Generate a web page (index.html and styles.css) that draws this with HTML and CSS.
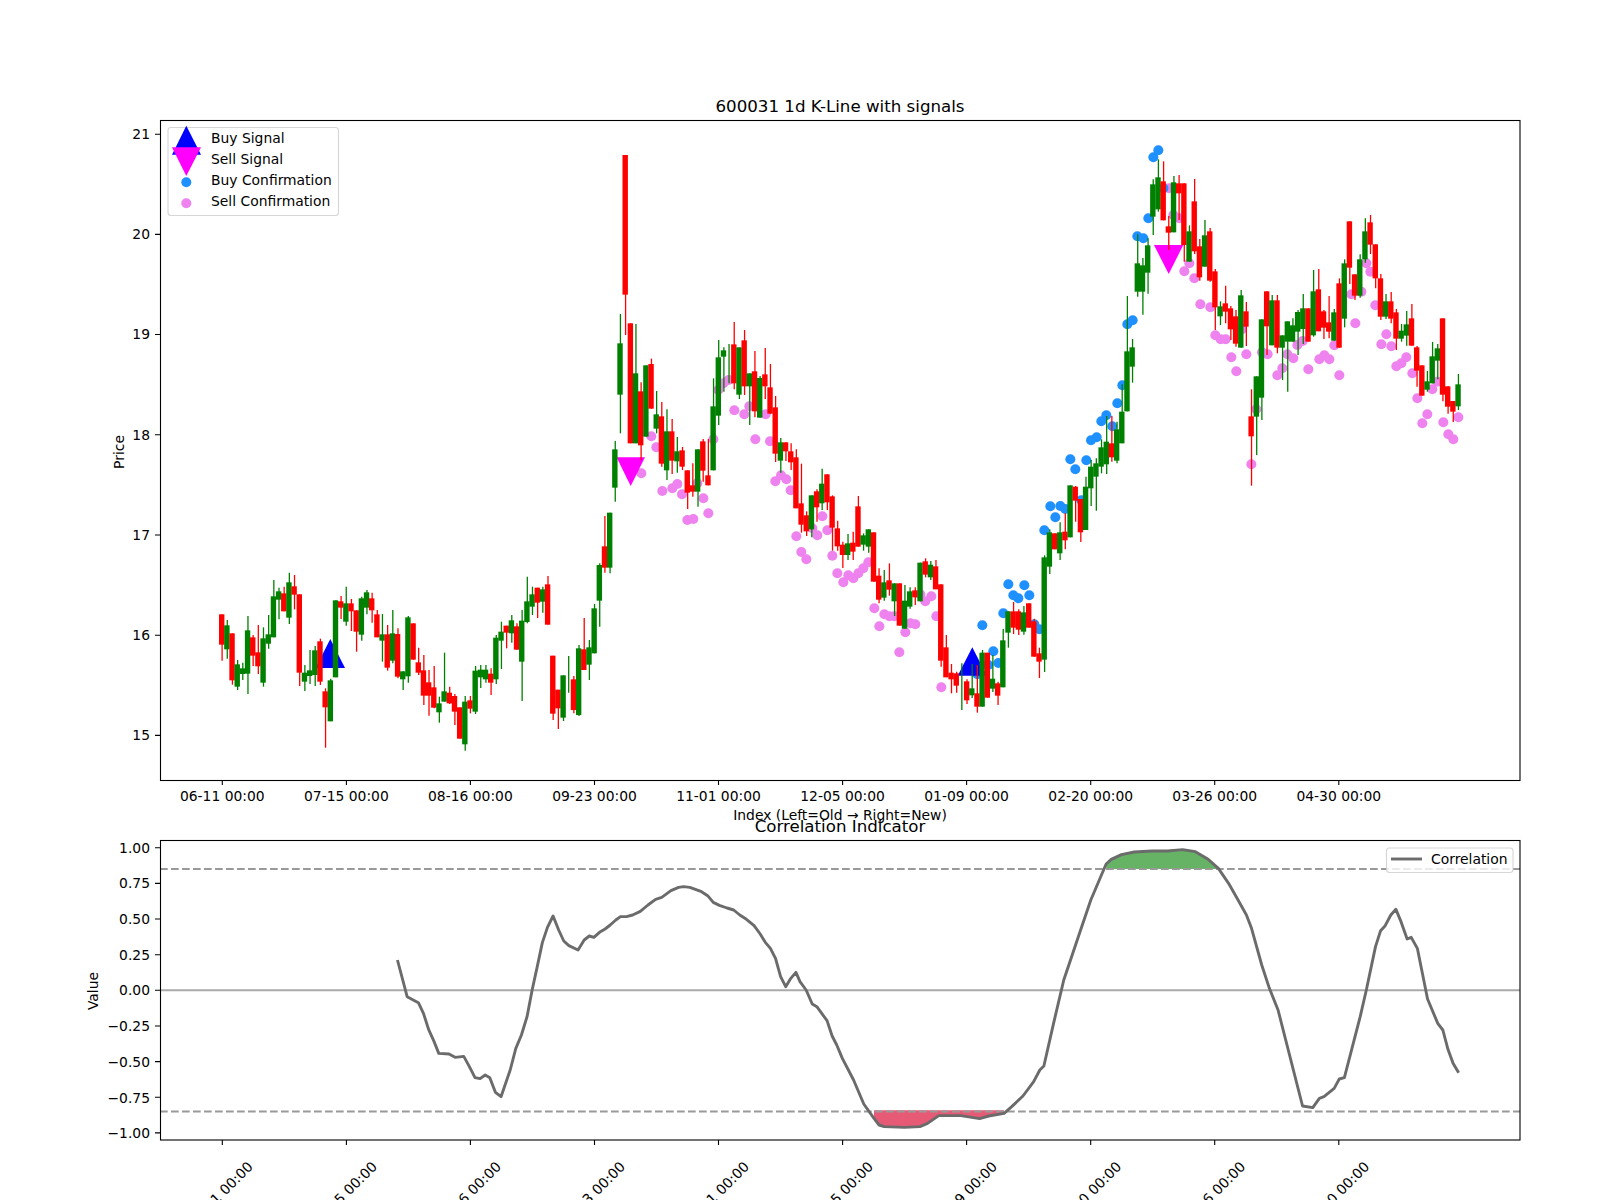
FILE: index.html
```html
<!DOCTYPE html>
<html lang="en">
<head>
<meta charset="utf-8">
<title>600031 1d K-Line with signals</title>
<link rel="stylesheet" href="styles.css">
</head>
<body>
<svg class="figure" id="figure" width="1600" height="1200" viewBox="0 0 1600 1200" xmlns="http://www.w3.org/2000/svg">
  <!-- price panel -->
  <g id="price-layer"></g>
  <rect class="frame" x="160.5" y="120.5" width="1359.5" height="660"/>
  <path class="tick" d="M222.3 780v5M346.4 780v5M470.4 780v5M594.5 780v5M718.5 780v5M842.6 780v5M966.6 780v5M1090.7 780v5M1214.7 780v5M1338.8 780v5M160 134.3h-5M160 234.4h-5M160 334.5h-5M160 434.7h-5M160 535h-5M160 635.3h-5M160 735.4h-5"/>
  <text class="title" x="840" y="112">600031 1d K-Line with signals</text>
  <g class="labels-end">
    <text x="150" y="139">21</text><text x="150" y="239">20</text><text x="150" y="339">19</text>
    <text x="150" y="439.5">18</text><text x="150" y="540">17</text><text x="150" y="640">16</text><text x="150" y="740">15</text>
  </g>
  <g class="labels-mid">
    <text x="222.3" y="801">06-11 00:00</text><text x="346.4" y="801">07-15 00:00</text><text x="470.4" y="801">08-16 00:00</text>
    <text x="594.5" y="801">09-23 00:00</text><text x="718.5" y="801">11-01 00:00</text><text x="842.6" y="801">12-05 00:00</text>
    <text x="966.6" y="801">01-09 00:00</text><text x="1090.7" y="801">02-20 00:00</text><text x="1214.7" y="801">03-26 00:00</text>
    <text x="1338.8" y="801">04-30 00:00</text>
    <text x="840" y="820">Index (Left=Old → Right=New)</text>
    <text transform="translate(124 452) rotate(-90)">Price</text>
    <text transform="translate(98 991) rotate(-90)">Value</text>
  </g>
  <!-- price legend -->
  <rect class="legend-box" x="168" y="127.5" width="170.5" height="88" rx="3"/>
  <path class="mark-buy" d="M186.3 125.7L201 154.7H172Z"/>
  <path class="mark-sell" d="M172 147.3H201L186.3 176Z"/>
  <circle class="dot-buy" cx="186.3" cy="182.3" r="5"/>
  <circle class="dot-sell" cx="186.3" cy="203.3" r="5"/>
  <text class="label" x="211" y="143">Buy Signal</text>
  <text class="label" x="211" y="164">Sell Signal</text>
  <text class="label" x="211" y="185">Buy Confirmation</text>
  <text class="label" x="211" y="206">Sell Confirmation</text>

  <!-- correlation panel -->
  <g id="corr-fill-layer"></g>
  <line class="zero" x1="160" x2="1520" y1="990.3" y2="990.3"/>
  <line class="threshold" x1="160" x2="1520" y1="869.1" y2="869.1"/>
  <line class="threshold" x1="160" x2="1520" y1="1111.5" y2="1111.5"/>
  <g id="corr-layer"></g>
  <rect class="frame" x="160.5" y="840.5" width="1359.5" height="299.5"/>
  <path class="tick" d="M222.3 1140v5M346.4 1140v5M470.4 1140v5M594.5 1140v5M718.5 1140v5M842.6 1140v5M966.6 1140v5M1090.7 1140v5M1214.7 1140v5M1338.8 1140v5M160 847.7h-5M160 883.4h-5M160 919h-5M160 954.7h-5M160 990.3h-5M160 1026h-5M160 1061.6h-5M160 1097.3h-5M160 1132.9h-5"/>
  <text class="title" x="840" y="832">Correlation Indicator</text>
  <g class="labels-end">
    <text x="150" y="852.7">1.00</text><text x="150" y="888.4">0.75</text><text x="150" y="924">0.50</text>
    <text x="150" y="959.7">0.25</text><text x="150" y="995.3">0.00</text><text x="150" y="1031">−0.25</text>
    <text x="150" y="1066.6">−0.50</text><text x="150" y="1103">−0.75</text><text x="150" y="1137.9">−1.00</text>
  </g>
  <rect class="legend-box" x="1386.5" y="848" width="126.5" height="24.5" rx="3"/>
  <line class="corr-line" x1="1391" x2="1422" y1="859" y2="859"/>
  <text class="label" x="1431" y="864">Correlation</text>
  <g class="labels-rot">
    <text transform="translate(220.3 1194) rotate(-45)">06-11 00:00</text>
    <text transform="translate(344.4 1194) rotate(-45)">07-15 00:00</text>
    <text transform="translate(468.4 1194) rotate(-45)">08-16 00:00</text>
    <text transform="translate(592.5 1194) rotate(-45)">09-23 00:00</text>
    <text transform="translate(716.5 1194) rotate(-45)">11-01 00:00</text>
    <text transform="translate(840.6 1194) rotate(-45)">12-05 00:00</text>
    <text transform="translate(964.6 1194) rotate(-45)">01-09 00:00</text>
    <text transform="translate(1088.7 1194) rotate(-45)">02-20 00:00</text>
    <text transform="translate(1212.7 1194) rotate(-45)">03-26 00:00</text>
    <text transform="translate(1336.8 1194) rotate(-45)">04-30 00:00</text>
  </g>
</svg>
<script src="chart.js"></script>
</body>
</html>
```
FILE: styles.css
```css
html, body { margin: 0; padding: 0; background: #fff; }
.figure { display: block; font-family: "DejaVu Sans", sans-serif; font-size: 13.89px; fill: #000; }
.frame { fill: none; stroke: #000; stroke-width: 1.1; }
.tick { fill: none; stroke: #000; stroke-width: 1.1; }
.title { font-size: 16.67px; text-anchor: middle; }
.labels-end text { text-anchor: end; }
.labels-mid text { text-anchor: middle; }
.labels-rot text { text-anchor: middle; dominant-baseline: central; }
.legend-box { fill: #fff; fill-opacity: .8; stroke: #ccc; stroke-opacity: .8; stroke-width: 1.1; }
.mark-buy { fill: #00f; }
.mark-sell { fill: #f0f; }
.dot-buy { fill: #1e90ff; }
.dot-sell { fill: #ee82ee; }
.wick-up { stroke: #f00; stroke-width: 1.3; }
.wick-down { stroke: #008000; stroke-width: 1.3; }
.body-up { fill: #f00; }
.body-down { fill: #008000; }
.zero { stroke: #aaa; stroke-width: 2; }
.threshold { stroke: #999; stroke-width: 2; stroke-dasharray: 7.7 3.3; }
.corr-line { fill: none; stroke: #6b6b6b; stroke-width: 2.9; stroke-linejoin: round; }
.fill-high { fill: #008000; fill-opacity: .6; }
.fill-low { fill: #dc143c; fill-opacity: .7; }
```
FILE: chart.js
```js
// Daily candles, [isGreen, wickTop, bodyTop, bodyBottom, wickBottom], y = base + v / 3
var SEGMENTS = [
  { start: 0, base: 540, rows: [
    [0,223,223,314,362],[1,240,256,328,356],[0,280,280,421,434],[1,360,373,440,450],[1,368,385,402,420],
    [1,228,271,401,462],[0,285,292,347,378],[0,255,337,379,402],[1,262,295,428,440],[1,225,283,311,326],
    [1,120,169,292,292],[1,143,154,179,238],[0,140,160,214,214],[1,98,127,233,252],[0,105,139,164,208],
    [0,163,163,398,438],[1,375,398,425,453],[1,330,391,408,432],[1,318,331,405,438],[0,296,304,425,435],
    [0,445,454,502,623],[1,416,421,544,544],[1,181,181,412,412],[0,168,184,203,237],[1,140,190,245,257],
    [0,177,190,214,273],[0,211,211,275,335],[1,170,175,284,302],[1,150,157,203,223],[0,158,175,211,248],
    [0,210,223,292,292],[1,222,283,302,365],[0,255,283,383,392],[1,210,280,362,370],[0,265,282,410,415],
    [1,394,394,418,450],[1,228,232,409,428],[0,250,250,359,359],[0,323,367,398,405],[0,345,391,467,495],
    [0,390,427,467,527],[0,378,442,503,505],[1,470,490,517,548],[1,338,454,485,485],[0,440,458,490,492],
    [0,462,468,515,555],[0,502,502,596,596],[1,468,485,613,632],[0,468,481,506,520],[1,378,392,515,522],
    [1,375,389,412,444],[1,375,389,418,428],[0,385,401,428,465],[1,285,293,418,432],[1,245,275,302,387],
    [0,257,257,278,325],[1,225,241,280,308],[0,250,259,329,329],[1,210,242,365,483],[1,110,184,246,250],
    [1,140,163,200,225],[0,143,143,188,234],[1,140,148,185,218],[0,108,133,254,254],[0,347,347,521,540],
    [0,449,449,505,567],[1,406,406,533,543],[1,348,400,400,458],[0,408,418,510,520],[1,315,325,525,528],
    [0,234,328,390,390],[1,300,322,374,420],[1,192,205,340,340],[1,70,75,182,260]
  ]},
  { start: 74, base: 130, rows: [
    [0,1158,1249,1313,1328],[1,1148,1148,1313,1330],[1,933,958,1073,1115],[1,552,640,794,910],[0,75,75,494,615],
    [0,580,580,940,940],[1,582,730,940,940],[0,757,784,946,990],[1,706,706,920,920],[0,686,702,836,836],
    [1,783,853,896,910],[0,816,859,1001,1010],[1,838,904,1021,1050],[0,867,904,992,1032],[1,921,964,994,1028],
    [0,951,961,1010,1020],[0,1021,1021,1088,1137],[0,1000,1066,1085,1100],[1,958,958,1085,1130],[0,927,934,1022,1055],
    [0,927,1036,1066,1066],[1,745,829,1021,1021],[1,630,682,857,885],[1,652,661,680,785],[1,642,700,700,760],
    [0,576,643,760,778],[1,652,652,794,807],[0,600,631,769,795],[1,730,730,769,885],[0,663,724,844,862],
    [1,738,744,863,863],[0,654,733,769,807],[0,702,772,851,851],[0,798,832,971,996],[1,924,937,992,1028],
    [0,937,937,964,993],[0,940,964,997,1020],[0,958,982,1135,1135],[0,1001,1120,1184,1208],[0,1144,1156,1204,1218],
    [1,1096,1096,1198,1222],[0,1078,1084,1132,1175],[1,1016,1061,1120,1140],[0,1033,1033,1117,1140],[0,1096,1099,1193,1262],
    [0,1172,1195,1249,1262],[0,1235,1244,1275,1314],[1,1212,1240,1275,1290],[0,1205,1238,1265,1290],[0,1098,1129,1250,1250],
    [1,1210,1216,1244,1262],[1,1198,1198,1250,1268]
  ]},
  { start: 126, base: 480, rows: [
    [0,157,157,305,305],[0,265,287,359,370],[1,270,307,353,362],[0,250,301,329,347],[1,310,310,364,408],
    [0,310,310,437,437],[1,315,362,446,446],[1,322,334,380,386],[0,322,331,352,375],[1,248,248,364,364],
    [0,235,244,284,292],[1,243,254,292,300],[0,240,259,328,328],[0,313,313,542,560],[0,465,502,592,592],
    [0,552,578,598,640],[0,575,580,617,638],[1,550,620,620,690],[0,598,604,661,672],[1,552,625,646,654],
    [0,555,640,680,698],[1,510,518,680,680],[0,518,518,653,653],[1,525,596,626,636],[0,605,610,647,675],
    [1,447,481,622,622],[1,394,394,458,503],[0,366,394,443,462],[0,388,394,449,465],[1,378,397,455,464],
    [0,370,370,443,443],[0,416,424,530,530],[0,503,520,545,594],[1,226,232,539,576],[1,148,157,260,282],
    [0,160,160,208,208],[1,127,157,220,240],[0,100,155,181,208]
  ]},
  { start: 164, base: 120, rows: [
    [1,1096,1096,1252,1252],[0,1098,1100,1142,1205],[0,1137,1137,1237,1266],[1,1070,1100,1230,1230],[1,1020,1040,1105,1158],
    [1,1015,1030,1070,1172],[1,958,982,1040,1060],[1,888,965,1033,1062],[0,888,970,1012,1025],[1,905,928,1022,1030],
    [1,793,875,970,970],[1,528,694,874,874],[1,657,682,740,788],[1,343,430,515,530],[1,414,436,515,584],
    [1,355,376,458,521],[1,178,193,290,345],[1,118,172,268,275],[0,124,184,301,301],[0,288,319,338,390],
    [1,168,187,337,337],[0,165,190,220,300],[0,190,190,375,425],[1,316,334,425,425],[0,177,244,394,402],
    [0,357,379,472,482],[1,300,346,440,440],[0,324,334,482,485],[0,447,454,562,630],[1,544,559,589,615],
    [0,497,550,575,610],[0,558,565,628,660],[0,570,589,671,680],[1,510,526,683,683],[0,546,574,620,678],
    [0,808,889,949,1097],[1,769,769,890,1005],[1,598,598,833,900],[0,514,514,619,705],[1,525,541,676,676],
    [0,525,541,683,700],[1,646,646,683,780],[1,604,604,665,815],[1,595,616,665,665],[1,570,576,635,705],
    [1,522,565,627,672],[0,565,565,665,665],[1,450,514,646,650],[0,447,508,634,634],[0,570,574,623,657],
    [0,528,607,635,655],[1,567,577,662,662],[0,475,490,683,683],[1,418,430,596,622],[0,304,304,443,492],
    [0,463,463,527,540],[1,403,418,527,533],[1,295,334,418,428],[0,285,307,374,402],[0,373,373,475,505],
    [0,462,475,590,600],[1,522,544,590,597],[0,516,544,596,610],[0,567,577,656,690],[1,612,632,656,665],
    [1,573,613,647,677],[0,552,595,677,677],[0,678,682,752,800],[0,736,736,827,827],[1,753,784,809,815],
    [1,666,709,790,790],[1,672,685,722,778],[0,595,595,824,844],[0,799,799,860,881],[0,843,843,875,906],
    [1,762,793,859,870]
  ]}
];

// Confirmation dots, [X, Y] with x = ox + X / 3, y = oy + Y / 3
var SELL_DOTS = [
  { ox: 580, oy: 130, pts: [[184,1030],[214,919],[229,952],[247,1083],[277,1075],[292,1062],[306,1093],[322,1170],[340,1167],[352,1060],[370,1105],[385,1150],[400,928],[415,780],[430,760],[446,750],[463,841],[493,853],[508,829],[526,928],[557,853],[570,934],[586,1054],[603,1036],[619,1048],[632,1081]] },
  { ox: 780, oy: 480, pts: [[49,169],[64,216],[79,238],[97,145],[112,166],[127,109],[142,151],[157,227],[172,280],[190,307],[205,286],[220,295],[235,280],[250,265],[265,247],[283,385],[298,439],[313,403],[328,409],[343,409],[376,457],[358,517],[391,430],[406,433],[421,343],[436,364],[454,349],[469,409],[484,622]] },
  { ox: 1050, oy: 120, pts: [[357,205],[370,285],[388,295],[403,454],[418,430],[433,475],[451,553],[481,562],[496,646],[512,658],[527,658],[544,712],[559,754],[576,628],[589,703],[604,1033],[619,868],[636,697],[653,703],[682,766],[697,745],[712,703],[730,715],[742,675],[758,663],[775,748],[808,718],[823,706],[838,718],[853,676],[868,766],[904,523],[916,610],[934,515],[949,430],[961,455],[976,556],[994,673],[1009,643],[1024,679],[1039,739],[1054,730],[1069,712],[1087,760],[1102,835],[1117,910],[1132,883],[1147,808],[1162,785],[1180,907],[1195,943],[1210,958],[1225,892]] }
];
var BUY_DOTS = [
  { ox: 780, oy: 480, pts: [[592,583],[607,436],[625,555],[640,514],[655,549],[670,400],[685,313],[700,346],[715,355],[733,316],[748,346],[763,433],[778,448],[793,151]] },
  { ox: 1050, oy: 120, pts: [[1,1159],[16,1192],[31,1158],[46,1167],[61,1018],[76,1048],[94,1141],[109,1021],[123,961],[140,952],[154,904],[169,886],[187,919],[202,850],[217,796],[232,613],[248,601],[262,349],[280,355],[295,295],[310,112],[325,91],[340,205]] }
];
var SIGNALS = [
  { cls: "mark-buy", d: "M330.3 639L345 668H315.6Z" },
  { cls: "mark-buy", d: "M972.3 647.3L986.9 675.7H957.7Z" },
  { cls: "mark-sell", d: "M616.6 457.3H645L630.7 486Z" },
  { cls: "mark-sell", d: "M1154 245H1183.3L1168.7 274Z" }
];

// Correlation series: first run x = X / 1.96, second run x = 800 + X / 1.96, y = 780 + Y / 3
var CORR_A = [[779,540],[798,650],[820,668],[830,700],[840,748],[850,782],[860,820],[880,822],[892,832],[909,829],[920,860],[931,893],[941,896],[951,885],[960,893],[971,937],[982,950],[1000,870],[1011,805],[1022,765],[1033,710],[1043,630],[1053,560],[1063,488],[1073,442],[1084,408],[1095,450],[1105,483],[1115,497],[1133,510],[1145,480],[1155,468],[1164,472],[1175,457],[1186,447],[1196,435],[1207,420],[1216,410],[1228,410],[1240,405],[1255,394],[1270,375],[1285,358],[1297,352],[1315,332],[1330,322],[1340,320],[1352,322],[1375,335],[1387,347],[1398,367],[1410,376],[1425,384],[1438,390],[1450,405],[1463,418],[1478,437],[1490,462],[1500,487],[1510,505],[1520,535],[1530,590],[1540,620],[1550,595],[1560,577]];
var CORR_B = [[0,605],[12,630],[24,672],[33,680],[53,722],[63,768],[72,795],[83,835],[105,900],[125,972],[145,1015],[155,1035],[165,1040],[205,1042],[235,1040],[250,1030],[272,1007],[315,1007],[352,1016],[370,1008],[400,1000],[415,980],[437,948],[458,905],[470,870],[478,858],[497,730],[517,600],[550,450],[570,360],[600,252],[610,238],[630,224],[655,216],[690,213],[720,213],[750,209],[775,215],[800,238],[820,265],[840,310],[855,350],[875,405],[885,445],[905,555],[920,625],[937,690],[985,978],[1005,983],[1018,955],[1027,950],[1047,925],[1057,897],[1067,893],[1098,710],[1110,630],[1128,500],[1138,452],[1147,437],[1158,405],[1168,388],[1178,425],[1190,477],[1198,472],[1210,505],[1230,657],[1250,730],[1260,750],[1270,808],[1280,850],[1291,878]];

var NS = "http://www.w3.org/2000/svg";
function el(parent, name, attrs) {
  var n = document.createElementNS(NS, name);
  for (var k in attrs) n.setAttribute(k, attrs[k]);
  parent.appendChild(n);
  return n;
}
var price = document.getElementById("price-layer");
var corr = document.getElementById("corr-layer");
var corrFill = document.getElementById("corr-fill-layer");

function drawDots(groups, cls) {
  groups.forEach(function (g) {
    g.pts.forEach(function (p) {
      el(price, "circle", { "class": cls, cx: g.ox + p[0] / 3, cy: g.oy + p[1] / 3, r: 5 });
    });
  });
}
drawDots(SELL_DOTS, "dot-sell");
drawDots(BUY_DOTS, "dot-buy");
SIGNALS.forEach(function (s) { el(price, "path", { "class": s.cls, d: s.d }); });

SEGMENTS.forEach(function (seg) {
  seg.rows.forEach(function (r, j) {
    var x = 221.7 + 5.173 * (seg.start + j);
    var y = function (v) { return seg.base + v / 3; };
    var kind = r[0] ? "down" : "up";
    el(price, "line", { "class": "wick-" + kind, x1: x + 0.4, x2: x + 0.4, y1: y(r[1]), y2: y(r[4]) });
    el(price, "rect", { "class": "body-" + kind, x: x - 2.7, y: y(r[2]), width: 5.4, height: Math.max(0, y(r[3]) - y(r[2])) });
  });
});

var line = CORR_A.map(function (p) { return [p[0] / 1.96, 780 + p[1] / 3]; })
  .concat(CORR_B.map(function (p) { return [800 + p[0] / 1.96, 780 + p[1] / 3]; }));

function fillRegion(test, level, cls) {
  var pts = line.filter(test);
  var first = pts[0], last = pts[pts.length - 1];
  var d = [[first[0], level]].concat(pts, [[last[0], level]]);
  el(corrFill, "polygon", { "class": cls, points: d.map(function (p) { return p.join(","); }).join(" ") });
}
fillRegion(function (p) { return p[1] < 869; }, 869.1, "fill-high");
fillRegion(function (p) { return p[1] > 1111 && p[0] < 1100; }, 1110.3, "fill-low");
el(corr, "polyline", { "class": "corr-line", points: line.map(function (p) { return p.join(","); }).join(" ") });
```
